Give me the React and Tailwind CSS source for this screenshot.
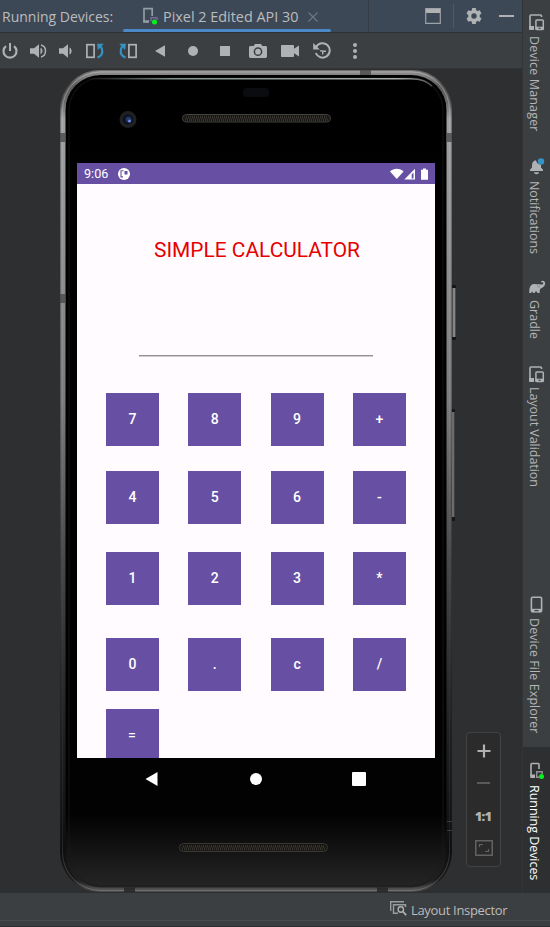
import React from "react";

const ide = "font-['Open_Sans','Noto_Sans',sans-serif]";

function Svg({ w, h, children, className = "" }) {
  return (
    <svg width={w} height={h} viewBox={`0 0 ${w} ${h}`} className={`block shrink-0 ${className}`} fill="none">
      {children}
    </svg>
  );
}

/* ---------- icons ---------- */

const DeviceTab = () => (
  <Svg w={18} h={18}>
    <path d="M8 14.700H3V1.700h8.200V9" stroke="#8f9da4" strokeWidth="1.700" />
    <path d="M2.200 14.500H8" stroke="#8f9da4" strokeWidth="2.400" />
    <path d="M10 14.500V10.700h6V13" stroke="#7a6792" strokeWidth="1.500" />
    <circle cx="13.500" cy="15" r="2.500" fill="#00f51a" />
  </Svg>
);

const DevicePair = () => (
  <Svg w={16} h={17}>
    <path d="M12.500 3V2c0-.6-.4-1-1-1H2c-.6 0-1 .4-1 1v12" stroke="#afb1b3" strokeWidth="1.600" />
    <path d="M0 12h5v4H1c-.6 0-1-.4-1-1z" fill="#afb1b3" />
    <rect x="6.900" y="5.900" width="7.400" height="9.700" rx="1" stroke="#afb1b3" strokeWidth="1.500" />
    <path d="M6.500 12.700h8V16h-8z" fill="#afb1b3" />
    <rect x="9.500" y="13.700" width="2" height="1.200" fill="#3c3f41" />
  </Svg>
);

const Bell = () => (
  <Svg w={16} h={17}>
    <path d="M1 13v-1.200l2-2.300V7c0-2.600 1.600-4.300 4-4.800.4 2.800 2.400 4.300 5 4.300v3l2 2.300V13z" fill="#afb1b3" />
    <path d="M5 14.300h5c0 1.200-1.100 2-2.500 2S5 15.500 5 14.300z" fill="#afb1b3" />
    <circle cx="12" cy="3.500" r="3.200" fill="#3592c4" />
  </Svg>
);

const Elephant = () => (
  <Svg w={17} h={14}>
    <path
      d="M.3 13C0 9 .8 5.300 3.800 4.200c2.300-.8 4 .3 6 0 1.400-.3 2.500.6 3.600.2 1-.4 1.100-1.500.5-2-.7-.5-1.500.1-1.900-.2-.4-.5.600-1.700 2-1.500 1.700.2 2.600 2 2 3.700-.8 2.200-2.500 3.100-3.900 3.800-.8.500-1.200 1.100-1.300 2.100L10.600 13H8.300c0-1-.6-1.400-1.200-1.400S5.900 12 5.800 13H3.900c0-.9-.4-1.300-.8-1.300-.5 0-.8.500-.8 1.300z"
      fill="#afb1b3"
    />
    <path d="M8.500 5.500c.3 1.500 1.300 1.800 2.300 1.200" stroke="#65686a" strokeWidth=".7" />
  </Svg>
);

const Handset = () => (
  <Svg w={13} h={17}>
    <rect x="1.400" y="1.200" width="10.200" height="14.600" rx="1.200" stroke="#afb1b3" strokeWidth="1.600" />
    <path d="M1 12.800h11v3.400H1z" fill="#afb1b3" />
    <rect x="4.500" y="14" width="4" height="1.200" fill="#3c3f41" />
  </Svg>
);

const DeviceRunning = () => (
  <Svg w={17} h={18}>
    <path d="M10 7V2.500c0-.7-.4-1-1-1H3c-.6 0-1 .3-1 1V14" stroke="#afb1b3" strokeWidth="1.600" />
    <path d="M1.200 12.500h4.800V16H2.200c-.6 0-1-.4-1-1z" fill="#afb1b3" />
    <path d="M7.700 15.500V9.700h5.400V12M7 15.300h3" stroke="#8f9193" strokeWidth="1.500" />
    <circle cx="12.500" cy="14.500" r="2.500" fill="#00f51a" />
  </Svg>
);

const Power = () => (
  <Svg w={16} h={16}>
    <path d="M4 3.100a6.500 6.500 0 1 0 8 0" stroke="#afb1b3" strokeWidth="2.200" />
    <path d="M8 0v8" stroke="#afb1b3" strokeWidth="2" />
  </Svg>
);

const VolumeUp = () => (
  <Svg w={18} h={14}>
    <path d="M0 4.200h4L9 .3v13.400l-5-3.900H0z" fill="#afb1b3" />
    <path d="M10.500 3.800c2.600 1 2.600 5.400 0 6.400z" fill="#afb1b3" />
    <path d="M11 1c6 1.500 6 10.500 0 12" stroke="#afb1b3" strokeWidth="1.500" />
  </Svg>
);

const VolumeDown = () => (
  <Svg w={13} h={14}>
    <path d="M0 4.200h4L9 .3v13.400l-5-3.900H0z" fill="#afb1b3" />
    <path d="M10.500 3.500c2.800 1 2.800 6 0 7z" fill="#afb1b3" />
  </Svg>
);

const RotateLeft = () => (
  <Svg w={18} h={16}>
    <rect x=".9" y="1.700" width="7.200" height="12.600" stroke="#afb1b3" strokeWidth="1.700" />
    <path d="M11.500 14.500c6.300-2.500 5.300-7.500 3.500-11" stroke="#3592c4" strokeWidth="2.200" />
    <path d="M11 .8h6.800L12 7z" fill="#3592c4" />
  </Svg>
);

const RotateRight = () => (
  <Svg w={18} h={16}>
    <rect x="9.900" y="1.700" width="7.200" height="12.600" stroke="#afb1b3" strokeWidth="1.700" />
    <path d="M6.500 14.500C.2 12 1.200 7 3 3.500" stroke="#3592c4" strokeWidth="2.200" />
    <path d="M7 .8H.2L6 7z" fill="#3592c4" />
  </Svg>
);

const Camera = () => (
  <Svg w={18} h={16}>
    <path d="M1.500 3h3.200L6 1h6l1.300 2h3.200c.8 0 1.500.6 1.500 1.400v9.200c0 .8-.7 1.400-1.500 1.400h-15C.7 15 0 14.400 0 13.600V4.400C0 3.600.7 3 1.500 3z" fill="#afb1b3" />
    <circle cx="9" cy="8.700" r="3.600" stroke="#3c3f41" strokeWidth="1.500" />
  </Svg>
);

const Video = () => (
  <Svg w={18} h={12}>
    <path d="M1 0h11c.6 0 1 .4 1 1v2.800L18 .5v11l-5-3.300V11c0 .6-.4 1-1 1H1c-.6 0-1-.4-1-1V1c0-.6.4-1 1-1z" fill="#afb1b3" />
  </Svg>
);

const HistoryIcon = () => (
  <Svg w={19} h={18}>
    <path d="M3.200 5A7.200 7.200 0 1 1 2.800 11" stroke="#afb1b3" strokeWidth="2" />
    <path d="M.2 1v6.500h6.600z" fill="#afb1b3" />
    <path d="M9.700 12.500V9.200H13M7 8.900h3" stroke="#afb1b3" strokeWidth="1.400" />
  </Svg>
);

const Inspector = () => (
  <Svg w={17} h={15}>
    <path d="M.7 10V.8H14M3.500 13V3.700h12V6M3.500 12.300H8" stroke="#9a9da0" strokeWidth="1.400" />
    <circle cx="10.800" cy="8.500" r="2.700" stroke="#afb1b3" strokeWidth="1.400" />
    <path d="M12.800 10.500l3.400 3.600" stroke="#afb1b3" strokeWidth="1.800" />
  </Svg>
);

/* ---------- header and toolbar ---------- */

function Header() {
  return (
    <header className="flex h-[33px] items-stretch border-b border-[#2f3133] bg-[#3d4856]">
      <div className="w-[123px] pl-[2px] text-[14px] leading-[34px] whitespace-nowrap text-[#bbbcbd]">Running Devices:</div>
      <div className="flex w-[208px] flex-col">
        <div className="flex h-[29px] items-center pl-[18px] pt-[2px]">
          <DeviceTab />
          <span className="ml-[4px] w-[142px] pt-[2px] text-[14.400px] leading-[30px] whitespace-nowrap text-[#bbbcbd]">Pixel 2 Edited API 30</span>
          <Svg w={10} h={10} className="mt-[2px] ml-[3px]"><path d="M.5.5l9 9M9.500.5l-9 9" stroke="#707780" strokeWidth="1.100" /></Svg>
        </div>
        <div className="h-[4px] rounded-full bg-[#4a88c7]" />
      </div>
      <div className="w-[38px] border-r border-[#343b45]" />
      <div className="flex flex-1 items-center">
        <Svg w={16} h={16} className="ml-[56px]">
          <path d="M.7.700h14.600v14.600H.7z" stroke="#9da2a8" strokeWidth="1.200" />
          <path d="M1 1h14v4H1z" fill="#afb1b3" />
        </Svg>
        <div className="ml-[12px] h-6 w-px bg-[#555a60]" />
        <Svg w={18} h={18} className="ml-[11px]">
          <path fillRule="evenodd" d="M7.200 1h3.600l.4 2.300 1.300.8 2.200-.8 1.800 3.100-1.800 1.500v2.200l1.800 1.500-1.800 3.100-2.200-.8-1.300.8-.4 2.300H7.200l-.4-2.300-1.300-.8-2.200.8-1.800-3.100 1.800-1.500V7.900L1.500 6.400l1.800-3.100 2.200.8 1.300-.8zM9 6.300a2.700 2.700 0 1 0 0 5.400 2.700 2.700 0 0 0 0-5.400z" fill="#afb1b3" />
        </Svg>
        <div className="ml-[16px] h-[2px] w-[15px] bg-[#afb1b3]" />
      </div>
    </header>
  );
}

function Toolbar() {
  return (
    <div className="flex h-[36px] shrink-0 items-center border-b border-[#323435] bg-[#3c3f41] pl-[2px] pt-[1px]">
      <Power />
      <div className="ml-[12px]"><VolumeUp /></div>
      <div className="ml-[11px]"><VolumeDown /></div>
      <div className="ml-[14px]"><RotateLeft /></div>
      <div className="ml-[15px]"><RotateRight /></div>
      <Svg w={10} h={12} className="ml-[18px]"><path d="M10 .3v11.400L0 6z" fill="#afb1b3" /></Svg>
      <div className="ml-[23px] size-[10px] rounded-full bg-[#afb1b3]" />
      <div className="ml-[22px] size-[10px] bg-[#afb1b3]" />
      <div className="ml-[19px]"><Camera /></div>
      <div className="ml-[14px]"><Video /></div>
      <div className="ml-[14px]"><HistoryIcon /></div>
      <div className="ml-[21px] flex flex-col gap-[2px]">
        <i className="size-[4px] rounded-full bg-[#afb1b3]" />
        <i className="size-[4px] rounded-full bg-[#afb1b3]" />
        <i className="size-[4px] rounded-full bg-[#afb1b3]" />
      </div>
    </div>
  );
}

/* ---------- phone ---------- */

function PhoneBody() {
  return (
    <svg className="absolute left-0 top-0" width="400" height="824" viewBox="0 0 400 824" fill="none">
      <defs>
        <linearGradient id="metal" x1="0" y1="0" x2="0" y2="1">
          <stop offset="0" stopColor="#969696" />
          <stop offset=".02" stopColor="#5a5a5a" />
          <stop offset=".04" stopColor="#6a6a6a" />
          <stop offset=".06" stopColor="#a0a0a0" />
          <stop offset=".4" stopColor="#7c7c7c" />
          <stop offset=".6" stopColor="#464646" />
          <stop offset=".78" stopColor="#252525" />
          <stop offset=".95" stopColor="#0e0e0e" />
          <stop offset=".985" stopColor="#1c1c1c" />
          <stop offset="1" stopColor="#606060" />
        </linearGradient>
        <linearGradient id="rim" x1="0" y1="0" x2="0" y2="1">
          <stop offset="0" stopColor="#bcbcbc" />
          <stop offset=".4" stopColor="#8c8c8c" />
          <stop offset=".7" stopColor="#3a3a3a" />
          <stop offset=".93" stopColor="#2c2c2c" />
          <stop offset="1" stopColor="#858585" />
        </linearGradient>
        <linearGradient id="glass" x1="0" y1="0" x2="0" y2="1">
          <stop offset="0" stopColor="#000" />
          <stop offset=".91" stopColor="#020202" />
          <stop offset=".97" stopColor="#1a1a1a" />
          <stop offset="1" stopColor="#252525" />
        </linearGradient>
        <linearGradient id="shine" x1="0" y1="0" x2="1" y2="0">
          <stop offset="0" stopColor="#83918b" stopOpacity="0" />
          <stop offset=".25" stopColor="#83918b" />
          <stop offset=".9" stopColor="#a9aead" />
          <stop offset="1" stopColor="#a9aead" stopOpacity=".4" />
        </linearGradient>
        <pattern id="mesh" width="4" height="6" patternUnits="userSpaceOnUse">
          <path d="M0 0l2 3-2 3M2 0l2 3-2 3" stroke="#4f4b45" strokeWidth=".7" />
        </pattern>
      </defs>
      <rect x="390" y="216" width="6" height="55" rx="1.500" fill="#151515" />
      <rect x="392.500" y="219" width="3" height="49" fill="#858585" />
      <rect x="390" y="340" width="5" height="112" rx="1.500" fill="#151515" />
      <rect x="391.500" y="343" width="3" height="105" fill="#6c6c6c" />
      <rect x="0" y="1" width="392" height="822" rx="40" fill="url(#metal)" />
      <rect x=".5" y="1.500" width="391" height="821" rx="39.500" stroke="#1c1c1c" strokeOpacity=".3" />
      <rect x="2.500" y="3" width="387" height="818.500" rx="38" stroke="url(#rim)" strokeOpacity=".5" strokeWidth="1" />
      <rect x="5.500" y="6" width="381" height="812.500" rx="35" fill="url(#glass)" />
      <rect x="9" y="9" width="374" height="808" rx="32" stroke="#1b1b1b" strokeWidth="1.500" strokeOpacity=".5" />
      <path d="M24 9.700h326c12 0 17 3 22 7.500" stroke="url(#shine)" strokeWidth="1.600" />
      <path d="M0 64h5v9H0zM387 64h5v9h-5zM0 225h5v9H0zM300 1h11v5h-11z" fill="#4a4a4a" fillOpacity=".8" />
      <path d="M64 818.500h11v4.500H64zM317 818.500h11v4.500h-11z" fill="#222" fillOpacity=".8" />
      <path d="M387 752.500h5M387 761.500h5" stroke="#3a3a3a" />
      <rect x="183" y="19" width="26" height="9" rx="4" fill="#0b0c10" />
      <circle cx="68" cy="50.500" r="8.500" fill="#1f2022" />
      <circle cx="68" cy="50.500" r="5" fill="#0c1020" />
      <circle cx="68.500" cy="50.500" r="3" fill="#243763" />
      <circle cx="69.500" cy="52" r="1.500" fill="#6d8ce2" />
      <rect x="122.500" y="45.500" width="148" height="7.500" rx="3.750" fill="#14130f" stroke="#454340" />
      <rect x="124.500" y="46.500" width="144" height="5.500" rx="2.700" fill="url(#mesh)" />
      <rect x="119.500" y="774.500" width="148" height="8" rx="4" fill="#14130f" stroke="#393837" />
      <rect x="121.500" y="776" width="144" height="5.500" rx="2.700" fill="url(#mesh)" />
    </svg>
  );
}

function Row({ keys, className }) {
  return (
    <div className={`flex gap-[29.300px] ${className}`}>
      {keys.map((k) => (
        <button key={k} className="h-[53px] w-[53px] shrink-0 bg-[#6750a3] pb-[1px] pt-[1px] text-center text-[14px] font-medium leading-[51px] text-white">
          {k}
        </button>
      ))}
    </div>
  );
}

function Phone() {
  return (
    <div className="relative ml-[60px] h-[824px] w-[392px] shrink-0 pt-[94px] font-[Roboto,sans-serif]">
      <PhoneBody />
      <main className="relative ml-[17px] h-[595px] w-[358px] overflow-hidden bg-[#fffbfe]">
        <div className="flex h-[21px] items-center bg-[#6750a3] text-white">
          <span className="ml-[7px] w-[34px] text-[12.600px] leading-[21px]">9:06</span>
          <Svg w={12} h={12}>
            <circle cx="6" cy="6" r="6" fill="#fff" />
            <path d="M5.500 2.700H3v6.200h2" stroke="#6750a3" strokeWidth="1.100" />
            <path d="M6.500 3h3v3.500h-3z" fill="#6750a3" />
          </Svg>
          <Svg w={40} h={12} className="ml-auto mr-[5px]">
            <path d="M0 3.500C3.500.2 10-.2 13.500 3.500L6.800 11z" fill="#fff" />
            <path d="M25 .8v10.700H14.300z" fill="#fff" />
            <path d="M23.500 4.500v6h-1.800V6.500z" fill="#6750a3" />
            <path d="M31 1.700h2V.5h3v1.200h2v10h-7z" fill="#fff" />
          </Svg>
        </div>
        <h1 className="mt-[52px] pl-[2px] text-center text-[20.900px] leading-[28px] whitespace-nowrap text-[#e60000]">SIMPLE CALCULATOR</h1>
        <div className="ml-[62px] mt-[91px] h-[2px] w-[234px] border-t border-[#949195] bg-[#cfccd0]" />
        <Row keys={["7", "8", "9", "+"]} className="ml-[29px] mt-[36px]" />
        <Row keys={["4", "5", "6", "-"]} className="ml-[29px] mt-[25px]" />
        <Row keys={["1", "2", "3", "*"]} className="ml-[29px] mt-[27.500px]" />
        <Row keys={["0", ".", "c", "/"]} className="ml-[29px] mt-[33px]" />
        <Row keys={["="]} className="ml-[28.500px] mt-[18.500px]" />
      </main>
      <nav className="relative flex h-[42px] items-center pl-[85px]">
        <Svg w={13} h={14}><path d="M12.500 0v14L.5 7z" fill="#fff" /></Svg>
        <div className="ml-[92px] size-[12px] rounded-full bg-white" />
        <div className="ml-[90px] size-[14px] rounded-[1px] bg-white" />
      </nav>
    </div>
  );
}

function ZoomPanel() {
  return (
    <div className="mt-[663px] ml-[14px] flex h-[135px] w-[35px] flex-col items-center rounded-[4px] border border-[#414345] bg-[#2b2b2b]">
      <Svg w={14} h={14} className="mt-[11px]"><path d="M7 .5v13M.5 7h13" stroke="#afb1b3" strokeWidth="2.200" /></Svg>
      <div className="mt-[24px] h-[2px] w-[13px] bg-[#595a5c]" />
      <div className="mt-[22px] h-[20px] pr-[1px] text-[13px] font-black leading-[20px] tracking-[-0.8px] text-[#afb1b3] font-['Open_Sans',sans-serif]">1:1</div>
      <Svg w={18} h={16} className="mt-[14px]">
        <path d="M.8.800h16.400v14.400H.8z" stroke="#616365" strokeWidth="1.500" />
        <path d="M4.500 7V4.500H8M10 11.500h3.500V9" stroke="#616365" strokeWidth="1.200" />
      </Svg>
    </div>
  );
}

/* ---------- tool window strip ---------- */

function SideItem({ icon, label, className, textClass }) {
  return (
    <div className={`flex flex-col items-start pl-[6px] ${className}`}>
      <div className="flex h-[17px] items-center">{icon}</div>
      <span className={`[writing-mode:vertical-rl] ml-[-4px] w-[18px] text-[12.500px] leading-[18px] whitespace-nowrap ${textClass}`}>{label}</span>
    </div>
  );
}

function SideStrip() {
  return (
    <aside className="flex w-[28px] shrink-0 flex-col border-l border-[#323435] bg-[#3c3f41] text-[#b4b6b8]">
      <SideItem className="h-[145px] pt-[14px]" icon={<DevicePair />} label="Device Manager" textClass="mt-[5px] tracking-[0.15px]" />
      <SideItem className="h-[121px] pt-[13px]" icon={<Bell />} label="Notifications" textClass="mt-[6px] tracking-[-0.05px]" />
      <SideItem className="h-[86px] pt-[12px]" icon={<Elephant />} label="Gradle" textClass="mt-[5px]" />
      <SideItem className="h-[231px] pt-[14px]" icon={<DevicePair />} label="Layout Validation" textClass="mt-[4px] tracking-[-0.05px]" />
      <SideItem className="h-[164px] pt-[13px] pl-[7px]!" icon={<Handset />} label="Device File Explorer" textClass="mt-[5px] ml-[-5px]! tracking-[0.08px]" />
      <SideItem className="flex-1 bg-[#2d2f31] pt-[15px]" icon={<DeviceRunning />} label="Running Devices" textClass="mt-[6px] tracking-[-0.05px] text-white" />
    </aside>
  );
}

export default function App() {
  return (
    <div className={`flex h-[927px] w-[550px] flex-col overflow-hidden bg-[#2e2f31] ${ide}`}>
      <div className="flex h-[893px] shrink-0">
        <div className="flex w-[522px] shrink-0 flex-col">
          <Header />
          <Toolbar />
          <div className="flex h-[824px]">
            <Phone />
            <ZoomPanel />
          </div>
        </div>
        <SideStrip />
      </div>
      <footer className="flex h-[34px] flex-col bg-[#3c3f41]">
        <div className="flex h-[28px] items-start border-b border-[#494c4e] pl-[390px] pt-[8px]">
          <Inspector />
          <span className="-mt-px ml-[4px] text-[13px] leading-[20px] tracking-[-0.32px] whitespace-nowrap text-[#bbbcbd]">Layout Inspector</span>
        </div>
        <div className="h-[5px]" />
        <div className="h-px bg-[#2b2d2f]" />
      </footer>
    </div>
  );
}
